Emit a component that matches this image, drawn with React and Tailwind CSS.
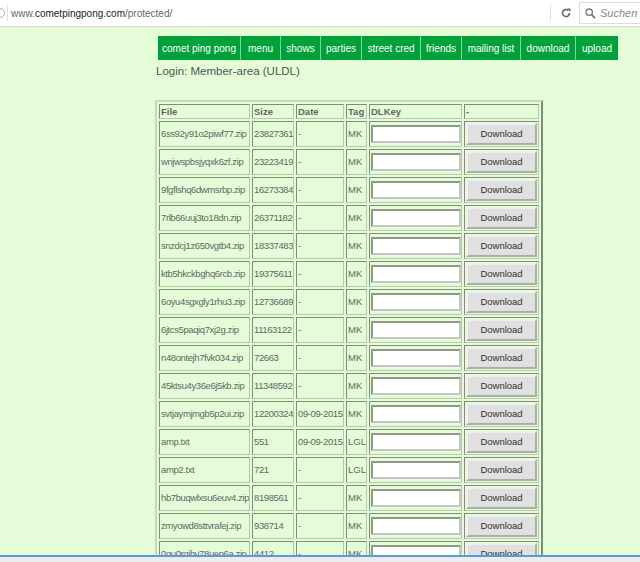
import React from 'react';

const rows = [
  ['6ss92y91o2piwf77.zip', '23827361', '-', 'MK'],
  ['wnjwspbsjyqxk6zf.zip', '23223419', '-', 'MK'],
  ['9fgflshq6dwmsrbp.zip', '16273384', '-', 'MK'],
  ['7rlb66uuj3to18dn.zip', '26371182', '-', 'MK'],
  ['snzdcj1z650vgtb4.zip', '18337483', '-', 'MK'],
  ['ktb5hkckbghq6rcb.zip', '19375611', '-', 'MK'],
  ['6oyu4sgxgly1rhu3.zip', '12736689', '-', 'MK'],
  ['6jtcs5paqiq7xj2g.zip', '11163122', '-', 'MK'],
  ['n48ontejh7fvk034.zip', '72663', '-', 'MK'],
  ['45ktsu4y36e6j5kb.zip', '11348592', '-', 'MK'],
  ['svtjaymjmgb5p2ui.zip', '12200324', '09-09-2015', 'MK'],
  ['amp.txt', '551', '09-09-2015', 'LGL'],
  ['amp2.txt', '721', '-', 'LGL'],
  ['hb7buqwlxsu6euv4.zip', '8198561', '-', 'MK'],
  ['zmyowd8sttvrafej.zip', '938714', '-', 'MK'],
  ['0gu0rqihy78uep6a.zip', '4412', '-', 'MK'],
];

const nav = [
  ['comet ping pong', 'w-[82px]'],
  ['menu', 'w-[40px]'],
  ['shows', 'w-[40px]'],
  ['parties', 'w-[41px]'],
  ['street cred', 'w-[59px]'],
  ['friends', 'w-[41px]'],
  ['mailing list', 'w-[59px]'],
  ['download', 'w-[55px]'],
  ['upload', 'w-[43px]'],
];

const cell = 'border border-t-[#7f8f77] border-l-[#7f8f77] border-r-[#b9c6b1] border-b-[#b9c6b1] p-0 pl-[1px] text-left align-middle whitespace-nowrap overflow-hidden';

export default function App() {
  return (
    <div className="h-[562px] w-[640px] overflow-hidden flex flex-col bg-[#e4fcd8] font-['Liberation_Sans',Arial,sans-serif]">
      {/* browser bar */}
      <div className="h-[27px] shrink-0 bg-white border-b border-[#d4d4d4] flex items-center">
        <svg width="6" height="12" viewBox="0 0 6 12" className="shrink-0">
          <path d="M0 1.5a4.5 4.5 0 0 1 0 9" fill="none" stroke="#aaa" strokeWidth="1" />
        </svg>
        <div className="ml-[1px] w-px h-[16px] bg-[#ddd]" />
        <div className="ml-[3px] text-[10px] text-[#666]">
          www.<span className="text-[#222]">cometpingpong.com</span>/protected/
        </div>
        <div className="flex-1" />
        <div className="w-px h-[16px] bg-[#ddd] mr-[9px]" />
        <svg width="12" height="12" viewBox="0 0 12 12" className="mr-[7px]">
          <path d="M9.5 6a3.5 3.5 0 1 1-1.2-2.6" fill="none" stroke="#666" strokeWidth="1.6" />
          <path d="M7 1.5h3.5V5z" fill="#666" />
        </svg>
        <div className="h-[22px] w-[61px] border-l border-t border-b border-[#ddd] flex items-center pl-[5px] gap-[4px]">
          <svg width="11" height="11" viewBox="0 0 11 11">
            <circle cx="4.2" cy="4.2" r="3.2" fill="none" stroke="#777" strokeWidth="1.3" />
            <path d="M6.6 6.6l3.5 3.5" stroke="#777" strokeWidth="1.6" />
          </svg>
          <span className="text-[11px] italic text-[#888]">Suchen</span>
        </div>
      </div>

      {/* page */}
      <div className="flex-1 overflow-hidden pl-[155px]">
        <div className="mt-[9px] ml-[3px] flex h-[24px] w-[460px] bg-[#00a13b]">
          {nav.map(([t, w], i) => (
            <div
              key={t}
              className={`${w} h-full flex items-center justify-center text-[10px] text-white ${i > 0 ? 'border-l border-[#7fd29c]' : ''}`}
            >
              {t}
            </div>
          ))}
        </div>
        <div className="mt-[3px] ml-[1px] text-[11.5px] leading-[17px] text-[#555]">Login: Member-area (ULDL)</div>

        <table className="mt-[20px] table-fixed border-separate border-spacing-[2px] border-2 border-t-[#c9d6c0] border-l-[#c9d6c0] border-r-[#7f8f77] border-b-[#7f8f77] text-[9.5px] tracking-[-0.4px] text-[#666] w-[388px]">
          <colgroup>
            <col className="w-[91px]" />
            <col className="w-[42px]" />
            <col className="w-[48px]" />
            <col className="w-[21px]" />
            <col className="w-[93px]" />
            <col className="w-[75px]" />
          </colgroup>
          <thead>
            <tr className="h-[15px]">
              {['File', 'Size', 'Date', 'Tag', 'DLKey', '-'].map((h) => (
                <td key={h} className={`${cell} font-bold text-[#666] leading-[12px] tracking-normal`}>{h}</td>
              ))}
            </tr>
          </thead>
          <tbody>
            {rows.map((r) => (
              <tr key={r[0]} className="h-[26px]">
                <td className={cell}>{r[0]}</td>
                <td className={cell}>{r[1]}</td>
                <td className={cell}>{r[2]}</td>
                <td className={`${cell} tracking-normal`}>{r[3]}</td>
                <td className={cell}>
                  <div className="h-[18px] w-[90px] bg-white border-2 border-t-[#8d9a86] border-l-[#8d9a86] border-r-[#c5c5c5] border-b-[#c5c5c5]" />
                </td>
                <td className={`${cell} px-[1px]`}>
                  <div className="h-[22px] w-[71px] bg-[#e0e0e0] border-2 border-t-[#f0f0f0] border-l-[#f0f0f0] border-r-[#a8b0a2] border-b-[#a8b0a2] flex items-center justify-center text-[9.5px] tracking-normal text-[#333]">
                    Download
                  </div>
                </td>
              </tr>
            ))}
          </tbody>
        </table>
      </div>

      {/* bottom frame */}
      <div className="h-[7px] shrink-0 border-t-2 border-[#5b9ad8] bg-[#ececec]" />
    </div>
  );
}
